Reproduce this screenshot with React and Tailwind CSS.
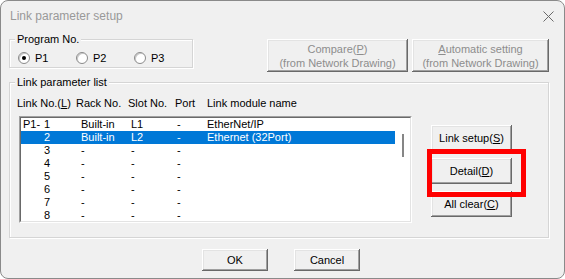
import React from "react";

const btn =
  "flex items-center justify-center bg-[#f0f0f0] shadow-[inset_-1px_-1px_0_#696969,inset_1px_1px_0_#ffffff,inset_-2px_-2px_0_#a0a0a0,inset_2px_2px_0_#e3e3e3]";

function Radio({ checked, label }) {
  return (
    <div className="flex w-[62px] items-center">
      <div className="flex h-[12px] w-[12px] items-center justify-center rounded-full border border-[#8a8a8a] bg-white shadow-[inset_1px_1px_0_#c8c8c8]">
        {checked && <div className="h-[4px] w-[4px] rounded-full bg-black" />}
      </div>
      <span className="ml-[5px] leading-[14px]">{label}</span>
    </div>
  );
}

const rows = [
  { p: "P1-", n: "1", rack: "Built-in", slot: "L1", port: "-", name: "EtherNet/IP" },
  { p: "", n: "2", rack: "Built-in", slot: "L2", port: "-", name: "Ethernet (32Port)", sel: true },
  { p: "", n: "3", rack: "-", slot: "-", port: "-", name: "" },
  { p: "", n: "4", rack: "-", slot: "-", port: "-", name: "" },
  { p: "", n: "5", rack: "-", slot: "-", port: "-", name: "" },
  { p: "", n: "6", rack: "-", slot: "-", port: "-", name: "" },
  { p: "", n: "7", rack: "-", slot: "-", port: "-", name: "" },
  { p: "", n: "8", rack: "-", slot: "-", port: "-", name: "" },
];

export default function App() {
  return (
    <div className="relative h-[279px] w-[565px] overflow-hidden rounded-[8px] border border-[#8a8a8a] bg-[#f0f0f0] font-['Liberation_Sans',Arial,sans-serif] text-[11px] text-black">
      {/* Title bar */}
      <div className="flex h-[30px] items-center justify-between pl-[9px] pr-[10px]">
        <span className="text-[12px] leading-[14px] text-[#999999]">Link parameter setup</span>
        <svg width="11" height="11" viewBox="0 0 11 11">
          <path d="M0.5 0.5 L10.5 10.5 M10.5 0.5 L0.5 10.5" stroke="#6a6a6a" strokeWidth="1" fill="none" />
        </svg>
      </div>

      <div className="flex flex-col pl-[8px]">
        {/* Row 1 */}
        <div className="mt-[8px] flex items-start">
          <div className="relative h-[29px] w-[184px] border border-[#d5d5d5] shadow-[inset_1px_1px_0_#ffffff,1px_1px_0_#ffffff]">
            <span className="absolute -top-[8px] left-[5px] bg-[#f0f0f0] px-[2px] leading-[14px]">Program No.</span>
            <div className="flex pl-[8px] pt-[11px]">
              <Radio checked label="P1" />
              <Radio label="P2" />
              <Radio label="P3" />
            </div>
          </div>
          <div className={`${btn} ml-[74px] h-[33px] w-[141px] flex-col leading-[14px] text-[#8d8d8d]`}>
            <span>
              Compare(<u>P</u>)
            </span>
            <span>(from Network Drawing)</span>
          </div>
          <div className={`${btn} ml-[4px] h-[33px] w-[137px] flex-col leading-[14px] text-[#8d8d8d]`}>
            <span>
              <u>A</u>utomatic setting
            </span>
            <span>(from Network Drawing)</span>
          </div>
        </div>

        {/* Link parameter list group */}
        <div className="relative mt-[10px] h-[156px] w-[540px] border border-[#d5d5d5] shadow-[inset_1px_1px_0_#ffffff,1px_1px_0_#ffffff]">
          <span className="absolute -top-[8px] left-[5px] bg-[#f0f0f0] px-[2px] leading-[14px]">Link parameter list</span>

          <div className="flex pl-[7px] pt-[13px] leading-[14px]">
            <span className="w-[59px]">
              Link No.(<u>L</u>)
            </span>
            <span className="w-[52px]">Rack No.</span>
            <span className="w-[47px]">Slot No.</span>
            <span className="w-[32px]">Port</span>
            <span>Link module name</span>
          </div>

          <div className="mt-[6px] flex pl-[9px]">
            {/* Listbox */}
            <div className="h-[107px] w-[393px] border border-b-[#ffffff] border-l-[#a0a0a0] border-r-[#ffffff] border-t-[#a0a0a0]">
              <div className="flex h-full overflow-hidden border border-b-[#e3e3e3] border-l-[#696969] border-r-[#e3e3e3] border-t-[#696969] bg-white">
                <div className="flex-1">
                  {rows.map((r, i) => (
                    <div
                      key={i}
                      className={`flex h-[13px] pl-[2px] leading-[13px] ${r.sel ? "bg-[#0078d7] text-white" : ""}`}
                    >
                      <div className="flex w-[58px]">
                        <span className="w-[20px]">{r.p}</span>
                        <span className="w-[7px] text-right">{r.n}</span>
                      </div>
                      <span className="w-[50px]">{r.rack}</span>
                      <span className="w-[46px]">{r.slot}</span>
                      <span className="w-[30px]">{r.port}</span>
                      <span>{r.name}</span>
                    </div>
                  ))}
                </div>
                <div className="w-[15px] bg-white pt-[16px]">
                  <div className="ml-[7px] h-[23px] w-[2px] bg-[#868686]" />
                </div>
              </div>
            </div>

            {/* Right buttons */}
            <div className="ml-[19px] mt-[9px] flex flex-col gap-[7px]">
              <div className={`${btn} h-[26px] w-[81px]`}>
                <span>
                  Link setup(<u>S</u>)
                </span>
              </div>
              <div className={`${btn} h-[26px] w-[81px]`}>
                <span>
                  Detail(<u>D</u>)
                </span>
              </div>
              <div className={`${btn} h-[26px] w-[81px]`}>
                <span>
                  All clear(<u>C</u>)
                </span>
              </div>
            </div>
          </div>
        </div>

        {/* OK / Cancel */}
        <div className="mt-[11px] flex gap-[26px] pl-[193px]">
          <div className={`${btn} h-[22px] w-[66px]`}>OK</div>
          <div className={`${btn} h-[22px] w-[66px]`}>Cancel</div>
        </div>
      </div>

      {/* Red annotation */}
      <div className="absolute left-[426px] top-[148px] h-[48px] w-[99px] border-[5px] border-[#ff0000]" />
    </div>
  );
}
